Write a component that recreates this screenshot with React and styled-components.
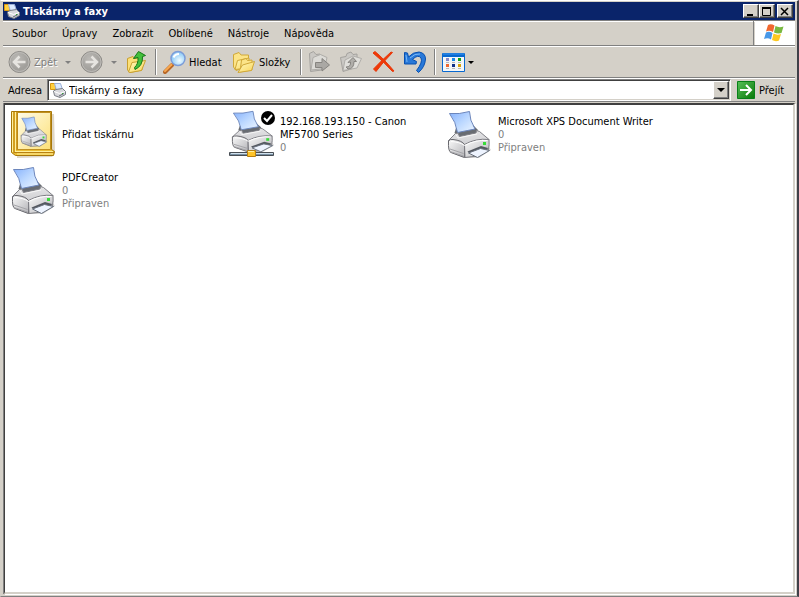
import React from "react";
import styled, { createGlobalStyle, css } from "styled-components";

const face = "#d4d0c8";
const uiFont = `"DejaVu Sans Condensed", "DejaVu Sans", sans-serif`;

const GlobalStyle = createGlobalStyle`
  *, *::before, *::after { box-sizing: border-box; }
  body { margin: 0; background: ${face}; }
  button, input { font: inherit; color: inherit; margin: 0; }
`;

const Window = styled.main`
  display: flex;
  flex-direction: column;
  min-height: 100vh;
  padding: 1px 2px 2px 2px;
  background: ${face};
  border-top: 1px solid #fff;
  border-left: 1px solid ${face};
  border-right: 2px solid #404048;
  border-bottom: 1px solid #808080;
  font: 11px/13px ${uiFont};
  color: #000;
  cursor: default;
`;

const TitleBar = styled.header`
  display: flex;
  align-items: center;
  height: 18px;
  padding: 0 2px 0 1px;
  gap: 3px;
  background: #0a246a;
  color: #fff;
`;

const Title = styled.h1`
  flex: 1;
  margin: 0;
  font-size: 11px;
  line-height: 13px;
  font-weight: bold;
`;

const CaptionButtons = styled.div`
  display: flex;
`;

const raised = css`
  background: ${face};
  border: 1px solid;
  border-color: #fff #404040 #404040 #fff;
  box-shadow: inset -1px -1px 0 #808080;
`;

const CaptionButton = styled.button`
  ${raised}
  width: 16px;
  height: 14px;
  padding: 0;
  margin-left: ${(p) => (p.$spaced ? "2px" : "0")};
  display: grid;
  place-items: center;
`;

const MenuRow = styled.div`
  display: flex;
  height: 26px;
  border-top: 1px solid #808080;
  border-bottom: 1px solid #808080;
  box-shadow: inset 0 1px 0 #fff;
`;

const Menu = styled.nav`
  flex: 1;
  display: flex;
  align-items: center;
  gap: 1px;
  padding: 1px 0 0 2px;
  border-right: 1px solid #808080;
`;

const MenuItem = styled.button`
  background: none;
  border: 0;
  padding: 0 7px;
  height: 20px;
`;

const Brand = styled.div`
  width: 40px;
  padding-right: 2px;
  display: grid;
  place-items: center;
  background: #fff;
  margin-left: 1px;
`;

const Toolbar = styled.div`
  display: flex;
  align-items: center;
  height: 32px;
  padding-left: 5px;
  border-top: 1px solid #fff;
  border-bottom: 1px solid #808080;
`;

const Tool = styled.button`
  display: flex;
  align-items: center;
  gap: 2px;
  height: 26px;
  padding: 0;
  width: ${(p) => p.$w}px;
  background: none;
  border: 0;
  white-space: nowrap;
  color: ${(p) => (p.disabled ? "#808080" : "#000")};
  text-shadow: ${(p) => (p.disabled ? "1px 1px 0 #fff" : "none")};
`;

const Separator = styled.span`
  width: 2px;
  height: 26px;
  margin-right: 6px;
  border-left: 1px solid #808080;
  border-right: 1px solid #fff;
`;

const Arrow = styled.span`
  width: 0;
  height: 0;
  border: 3px solid transparent;
  border-top-color: ${(p) => (p.$muted ? "#808080" : "#000")};
  border-bottom: 0;
`;

const WideArrow = styled(Arrow)`
  border-width: 4px 4px 0;
`;

const AddressBar = styled.form`
  display: flex;
  align-items: center;
  height: 24px;
  padding-left: 5px;
  border-top: 1px solid #fff;
  border-bottom: 1px solid #808080;
`;

const AddressLabel = styled.label`
  width: 39px;
`;

const Combo = styled.div`
  flex: 1;
  display: flex;
  align-items: center;
  height: 22px;
  padding-left: 2px;
  background: #fff;
  border: 1px solid;
  border-color: #808080 #fff #fff #808080;
  box-shadow: inset 1px 1px 0 #404040, inset -1px -1px 0 ${face};
`;

const AddressInput = styled.input`
  flex: 1;
  min-width: 0;
  padding: 0;
  margin-left: 3px;
  height: 16px;
  border: 0;
  outline: 0;
  background: transparent;
`;

const DropButton = styled.button`
  ${raised}
  width: 16px;
  height: 18px;
  margin-right: 1px;
  padding: 0;
  display: grid;
  place-items: center;
`;

const GoButton = styled.button`
  display: flex;
  align-items: center;
  gap: 4px;
  width: 64px;
  padding: 0 0 0 6px;
  border: 0;
  background: none;
`;

const Content = styled.ul`
  flex: 1;
  list-style: none;
  margin: 1px 0 0 1px;
  padding: 1px 0 0 4px;
  display: grid;
  grid-template-columns: repeat(auto-fill, 218px);
  grid-auto-rows: 56px;
  align-content: start;
  background: #fff;
  border: 2px solid;
  border-color: #404040 ${face} ${face} #404040;
  border-left-width: 1px;
  box-shadow: -1px 0 0 #808080, 1px 1px 0 #fff;
`;

const Item = styled.li`
  display: flex;
  align-items: center;
  gap: 5px;
  height: 56px;
`;

const Name = styled.div`
  max-width: 156px;
`;

const Status = styled.div`
  color: #808080;
`;

const PaintDefs = styled.svg`
  position: absolute;
`;

/* Shared gradients for every drawing in the window. */
const Paints = () => (
  <PaintDefs width="0" height="0" aria-hidden="true">
    <defs>
      <linearGradient id="paper" x1="0" y1="0" x2="1" y2="1">
        <stop offset="0" stopColor="#84b0fc" />
        <stop offset=".5" stopColor="#bcd8ff" />
        <stop offset="1" stopColor="#eef6ff" />
      </linearGradient>
      <linearGradient id="shell" x1="0" y1="0" x2="0" y2="1">
        <stop offset="0" stopColor="#e4e4e6" />
        <stop offset="1" stopColor="#cfcfd2" />
      </linearGradient>
      <linearGradient id="front" x1="0" y1="0" x2="1" y2="1">
        <stop offset="0" stopColor="#fafafa" />
        <stop offset="1" stopColor="#b4b4b8" />
      </linearGradient>
      <linearGradient id="gold" x1="0" y1="0" x2="1" y2="1">
        <stop offset="0" stopColor="#fffac0" />
        <stop offset="1" stopColor="#fad458" />
      </linearGradient>
      <linearGradient id="page" x1="0" y1="0" x2="1" y2="1">
        <stop offset="0" stopColor="#fffce8" />
        <stop offset="1" stopColor="#fce078" />
      </linearGradient>
      <linearGradient id="green" x1="0" y1="0" x2="1" y2="1">
        <stop offset="0" stopColor="#58c058" />
        <stop offset="1" stopColor="#087808" />
      </linearGradient>
      <radialGradient id="disc" cx=".4" cy=".35">
        <stop offset="0" stopColor="#bcbab6" />
        <stop offset="1" stopColor="#a2a09c" />
      </radialGradient>
      <radialGradient id="lens" cx=".6" cy=".65">
        <stop offset="0" stopColor="#f0fcff" />
        <stop offset="1" stopColor="#98d0f8" />
      </radialGradient>
    </defs>
  </PaintDefs>
);

const PrinterShape = () => (
  <g strokeLinejoin="round">
    <path d="M4 42 20 48.500 34 48 46 40 44 37 20 43Z" fill="#777" opacity=".3" />
    <path d="M9.500 23 11 18 28 15 33 20 30 25 14 27Z" fill="#686c72" />
    <path d="M4.500 3.500Q14 4.500 24.500 1.500 24.500 10 30 19L12.500 22.500Q11 12 4.500 3.500Z" fill="url(#paper)" stroke="#6c86bc" />
    <path d="M3 31 10.500 23.500 13 23 14.500 26.500 31 23 31.500 20.500 34.500 21.500 44 29.500 42 31.500 20.500 36Z" fill="url(#shell)" stroke="#808086" />
    <path d="M3.500 31Q5 29 8 29.500 17 30.500 19.500 34.500V47.500L6 42.500Q3 41.500 3.500 31Z" fill="url(#front)" stroke="#66666c" />
    <path d="M19.500 34.500Q31 28 44 29.500 44.500 35 43.500 39.500L33 46 20 47.500Z" fill="url(#front)" stroke="#7c7c82" />
    <path d="M6 31.500Q15 32 19.500 35.500 31 29.500 42.500 30.500" fill="none" stroke="#fff" />
    <path d="M5 39 18.500 43.500M5 41.500 18.500 46" stroke="#a4a4a8" />
    <path d="M22.500 41.500 36 36 43 38 42 40 25 44Z" fill="#545860" />
    <path d="M23.500 43 35.500 38.500 44.500 40.500 32.500 47.500Z" fill="#eef4ff" stroke="#68707c" />
    <path d="M38 32h3v3h-3z" fill="#38dc38" />
    <path d="M11 24.500 13 28 32 24" fill="none" stroke="#f8f8f8" />
  </g>
);

const PrinterIcon = ({ network, standard }) => (
  <svg width="48" height="48" viewBox="0 0 48 48" aria-hidden="true">
    {network ? (
      <>
        <g transform="translate(2 0) scale(.98 .88)"><PrinterShape /></g>
        <path d="M2.500 42.500h44v3h-44z" fill="#7890a4" stroke="#484e54" />
        <path d="M4 43.500h42" stroke="#d0e0ec" />
        <path d="M20.500 40.500h8v6h-8z" fill="#ffc428" stroke="#b88010" />
        <path d="M21 41.500h6" stroke="#fff0a0" />
      </>
    ) : (
      <PrinterShape />
    )}
    {standard && (
      <>
        <circle cx="41" cy="8" r="7" fill="#000" />
        <path d="M37 8 40 11 45 5" fill="none" stroke="#fff" strokeWidth="2" />
      </>
    )}
  </svg>
);

const AddPrinterIcon = () => (
  <svg width="48" height="48" viewBox="0 0 48 48" aria-hidden="true">
    <path d="M8 5 45 4 46 43 43 47 8 48Z" fill="#806020" opacity=".25" />
    <path d="M2.500 1.500H42.500V39.500L45.500 41.500 44.500 45.500H6.500L2.500 42.500Z" fill="#edbe32" stroke="#a87808" />
    <path d="M8.500 2.500H41.500V39.500H8.500Z" fill="url(#page)" stroke="#c09020" />
    <path d="M3.500 2V42M6.500 2V43" stroke="#fff0a0" />
    <path d="M5 2V43M8 2V40" stroke="#b88010" />
    <path d="M7 41.500H44M8 44H44" stroke="#fff09a" />
    <path d="M5 42.500H45" stroke="#b88010" />
    <g transform="translate(10 6) scale(.62 .64)"><PrinterShape /></g>
  </svg>
);

const SmallPrinterIcon = () => (
  <svg width="16" height="16" viewBox="0 0 16 16" aria-hidden="true">
    <path d="M.500 1.500h5v6h-5z" fill="#ffd040" stroke="#d89810" />
    <path d="M4.500 1.500 10.500 1.500 12.500 7.500 6.500 8.500Z" fill="#dceaff" stroke="#9cb0d8" />
    <path d="M3.500 9 6 7.500 12.500 6.500 15.500 9.500V12.500L10 15.500 4.500 13.500Z" fill="#d8d8dc" stroke="#787c84" />
    <path d="M4 9.500 9.500 11.500 15 9.500" fill="none" stroke="#fff" />
    <path d="M9 14 14 11.500" stroke="#606870" />
    <path d="M12 11h1v1h-1z" fill="#30b030" />
  </svg>
);

const DiscIcon = ({ forward }) => (
  <svg width="24" height="24" viewBox="0 0 24 24" aria-hidden="true">
    <circle cx="11.500" cy="12" r="10.500" fill="url(#disc)" stroke="#8c8a86" />
    <circle cx="11.500" cy="12" r="9.500" fill="none" stroke="#bebcb8" />
    <path
      d={forward ? "M5.500 12H16.500M11.500 6.500 17 12 11.500 17.500" : "M17.500 12H6.500M11.500 6.500 6 12 11.500 17.500"}
      fill="none"
      stroke="#e6e4e0"
      strokeWidth="2.500"
    />
  </svg>
);

const UpIcon = () => (
  <svg width="24" height="24" viewBox="0 0 24 24" aria-hidden="true">
    <path d="M1.500 8.500 7 6.500 8.500 8.500 16 7.500V20L4 22.500 1.500 20Z" fill="#fce078" stroke="#c8a030" />
    <path d="M2.500 22 6 12.500 19.500 10.500 15.500 20.500 4 22.500Z" fill="url(#gold)" stroke="#c8a030" />
    <path d="M8.500 17.500Q12.500 14 12 7.500L7.500 8.500 12.500 1.500 19.500 5.500 16.500 6.500Q17 16 9 19.500Z" fill="#44c03c" stroke="#147818" />
  </svg>
);

const SearchIcon = () => (
  <svg width="24" height="24" viewBox="0 0 24 24" aria-hidden="true">
    <path d="M2 22 9 15" stroke="#b86828" strokeWidth="4" strokeLinecap="round" />
    <path d="M2 21 8.500 14.500" stroke="#f8a850" strokeWidth="2" strokeLinecap="round" />
    <circle cx="15" cy="8.500" r="7" fill="url(#lens)" stroke="#7c9cd8" strokeWidth="1.500" />
    <path d="M10.500 7.500Q12 4 16 4" fill="none" stroke="#fff" strokeWidth="2" />
  </svg>
);

const FoldersIcon = () => (
  <svg width="24" height="24" viewBox="0 0 24 24" aria-hidden="true">
    <path d="M.500 4.500 6 2.500 8 5 15.500 5V16L3 20.500.500 17Z" fill="#fce488" stroke="#d0a838" />
    <path d="M2 19.500 4.500 10.500 16 8V18Z" fill="url(#gold)" stroke="#d0a838" />
    <path d="M8.500 10 13 8.500 14.500 10.500 19 10V20L7 22Z" fill="#fce488" stroke="#d0a838" />
    <path d="M5 22.500 9.500 15 21.500 11.500 18.500 20.500Z" fill="url(#gold)" stroke="#d0a838" />
  </svg>
);

const MoveIcon = () => (
  <svg width="24" height="24" viewBox="0 0 24 24" aria-hidden="true">
    <path d="M1.500 3.500 5.500 1.500 8 4.500 12 4 13.500 6V20L2.500 21.500Z" fill="#cac8c4" stroke="#a4a29e" />
    <path d="M3 20 5 7.500 12.500 4.500 19 7.500 16.500 18.500Z" fill="#dcdbd7" stroke="#aeaca8" />
    <path d="M7.500 12.500H14V8.500L21.500 15 14 21V17.500H7.500Z" fill="#aaa8a4" stroke="#868480" />
  </svg>
);

const CopyIcon = () => (
  <svg width="24" height="24" viewBox="0 0 24 24" aria-hidden="true">
    <path d="M.500 7.500 6 6.500 7 3.500 11 2 13 4.500 17 4V17L3 21.500Z" fill="#cac8c4" stroke="#a4a29e" />
    <path d="M3 20.500 5 10 13 6 21.500 8.500 17 18Z" fill="#e0dfdb" stroke="#b0aeaa" />
    <path d="M6 17Q11 17 10.500 12L8 12.500 13 7.500 16.500 11.500 14 11.500Q14 19 8 19Z" fill="#b0aeaa" stroke="#868480" />
  </svg>
);

const DeleteIcon = () => (
  <svg width="24" height="24" viewBox="0 0 24 24" aria-hidden="true">
    <path d="M1 3 3 1.500Q11 8 22 21L20.500 21.500Q11 11 1 3Z" fill="#f03808" stroke="#e83808" />
    <path d="M20.500 2.500 19 2Q9 11 1.500 19L4 21.500Q11 12 20.500 2.500Z" fill="#f03808" stroke="#e83808" />
  </svg>
);

const UndoIcon = () => (
  <svg width="24" height="24" viewBox="0 0 24 24" aria-hidden="true">
    <path
      d="M.500 2.500 3.500 3 4.500 7Q9 2 15 2 21.500 3 21.500 9 21 17 14.500 22.500L12.500 20.500Q19 12 17 8 14 4 8.500 9.500L12.500 11.500 12 14H.500Z"
      fill="#2878d8"
      stroke="#0850b0"
      strokeLinejoin="round"
    />
    <path d="M2 5 3 12M6 8Q11 3 16 4" fill="none" stroke="#78b8f8" />
  </svg>
);

const ViewsIcon = () => (
  <svg width="24" height="20" viewBox="0 0 24 20" aria-hidden="true">
    <rect x="0" y="1" width="23" height="19" rx="1" fill="#0868d0" />
    <path d="M1 5H22V19H1Z" fill="#f4f7f8" />
    <path d="M1 2H22" stroke="#3894f0" />
    <path d="M4 6h3v3h-3z" fill="#8888c8" /><path d="M10 6h3v3h-3z" fill="#1888e8" /><path d="M16 6h3v3h-3z" fill="#10a018" />
    <path d="M4 12h3v3h-3z" fill="#f06830" /><path d="M10 12h3v3h-3z" fill="#103088" /><path d="M16 12h3v3h-3z" fill="#d8a008" />
    <path d="M4 10.500h3M10 10.500h3M16 10.500h3M4 16.500h3M10 16.500h3M16 16.500h3" stroke="#b8b8b8" />
  </svg>
);

const GoIcon = () => (
  <svg width="18" height="18" viewBox="0 0 18 18" aria-hidden="true">
    <path d="M.500.500h17v17H.500z" fill="url(#green)" stroke="#088018" />
    <path d="M3 9H13M9 4 14 9 9 14" fill="none" stroke="#fff" strokeWidth="2" />
  </svg>
);

const FlagIcon = () => (
  <svg width="20" height="18" viewBox="0 0 20 18" aria-hidden="true">
    <path d="M4 1Q7-.500 10.500 1.500L9 8Q5.500 6 2 7.500Z" fill="#f06830" />
    <path d="M11.500 2Q15 4 19.500 2.500L17.500 9Q14 10 10 8.500Z" fill="#78b840" />
    <path d="M2 8.500Q5 7 8.500 9L7 15.500Q4 13.500 0 15Z" fill="#4898e8" />
    <path d="M9.500 9.500Q13 11.500 17 10L15 16.500Q11.500 18 8 16Z" fill="#fcc820" />
  </svg>
);

const menus = ["Soubor", "Úpravy", "Zobrazit", "Oblíbené", "Nástroje", "Nápověda"];

const printers = [
  { name: "Přidat tiskárnu", lines: [], icon: <AddPrinterIcon /> },
  { name: "192.168.193.150 - Canon MF5700 Series", lines: ["0"], icon: <PrinterIcon network standard /> },
  { name: "Microsoft XPS Document Writer", lines: ["0", "Připraven"], icon: <PrinterIcon /> },
  { name: "PDFCreator", lines: ["0", "Připraven"], icon: <PrinterIcon /> },
];

export default function App() {
  return (
    <Window>
      <GlobalStyle />
      <Paints />
      <TitleBar>
        <SmallPrinterIcon />
        <Title>Tiskárny a faxy</Title>
        <CaptionButtons>
          <CaptionButton aria-label="Minimalizovat">
            <svg width="10" height="9"><path d="M1 7h6v2H1z" /></svg>
          </CaptionButton>
          <CaptionButton aria-label="Maximalizovat">
            <svg width="10" height="9"><path d="M.500 0v8.500h8V0" fill="none" stroke="#000" /><path d="M0 0h9v2H0z" /></svg>
          </CaptionButton>
          <CaptionButton $spaced aria-label="Zavřít">
            <svg width="10" height="9"><path d="M1 1 8 8M8 1 1 8" stroke="#000" strokeWidth="1.500" /></svg>
          </CaptionButton>
        </CaptionButtons>
      </TitleBar>
      <MenuRow>
        <Menu>
          {menus.map((m) => <MenuItem key={m}>{m}</MenuItem>)}
        </Menu>
        <Brand><FlagIcon /></Brand>
      </MenuRow>
      <Toolbar>
        <Tool $w={57} disabled><DiscIcon />Zpět</Tool>
        <Tool $w={15} disabled aria-label="Historie zpět"><Arrow $muted /></Tool>
        <Tool $w={31} disabled aria-label="Vpřed"><DiscIcon forward /></Tool>
        <Tool $w={15} disabled aria-label="Historie vpřed"><Arrow $muted /></Tool>
        <Tool $w={29} aria-label="Nahoru"><UpIcon /></Tool>
        <Separator />
        <Tool $w={70}><SearchIcon />Hledat</Tool>
        <Tool $w={67}><FoldersIcon />Složky</Tool>
        <Separator />
        <Tool $w={32} disabled aria-label="Přesunout do"><MoveIcon /></Tool>
        <Tool $w={32} disabled aria-label="Kopírovat do"><CopyIcon /></Tool>
        <Tool $w={32} aria-label="Odstranit"><DeleteIcon /></Tool>
        <Tool $w={30} aria-label="Zpět změnu"><UndoIcon /></Tool>
        <Separator />
        <Tool $w={34} aria-label="Zobrazení"><ViewsIcon /><Arrow /></Tool>
      </Toolbar>
      <AddressBar onSubmit={(e) => e.preventDefault()}>
        <AddressLabel htmlFor="address">Adresa</AddressLabel>
        <Combo>
          <SmallPrinterIcon />
          <AddressInput id="address" defaultValue="Tiskárny a faxy" />
          <DropButton type="button" aria-label="Rozbalit"><WideArrow /></DropButton>
        </Combo>
        <GoButton type="submit"><GoIcon />Přejít</GoButton>
      </AddressBar>
      <Content>
        {printers.map((p) => (
          <Item key={p.name}>
            {p.icon}
            <div>
              <Name>{p.name}</Name>
              {p.lines.map((l) => <Status key={l}>{l}</Status>)}
            </div>
          </Item>
        ))}
      </Content>
    </Window>
  );
}
